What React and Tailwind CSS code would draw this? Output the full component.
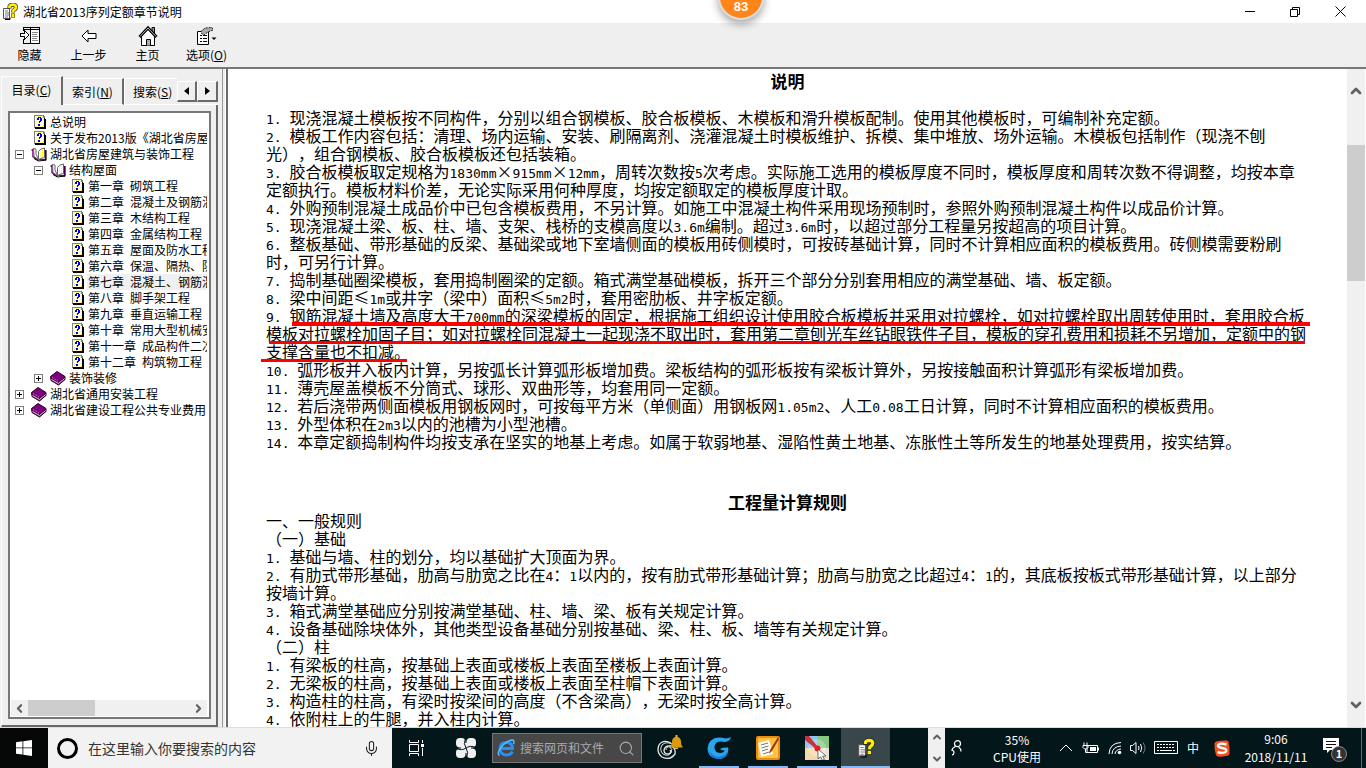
import { ChevronDown, ChevronLeft, ChevronRight, ChevronUp, Mic, Search } from 'lucide-react'

const TREE = [
  { level: 0, kind: 'page', label: '总说明' },
  { level: 0, kind: 'page', label: '关于发布2013版《湖北省房屋建筑与装饰工程》' },
  { level: 0, kind: 'open', label: '湖北省房屋建筑与装饰工程' },
  { level: 1, kind: 'open', label: '结构屋面' },
  { level: 2, kind: 'page', label: '第一章 砌筑工程' },
  { level: 2, kind: 'page', label: '第二章 混凝土及钢筋混凝土' },
  { level: 2, kind: 'page', label: '第三章 木结构工程' },
  { level: 2, kind: 'page', label: '第四章 金属结构工程' },
  { level: 2, kind: 'page', label: '第五章 屋面及防水工程' },
  { level: 2, kind: 'page', label: '第六章 保温、隔热、防腐' },
  { level: 2, kind: 'page', label: '第七章 混凝土、钢筋混凝土', selected: true },
  { level: 2, kind: 'page', label: '第八章 脚手架工程' },
  { level: 2, kind: 'page', label: '第九章 垂直运输工程' },
  { level: 2, kind: 'page', label: '第十章 常用大型机械安拆' },
  { level: 2, kind: 'page', label: '第十一章 成品构件二次运输' },
  { level: 2, kind: 'page', label: '第十二章 构筑物工程' },
  { level: 1, kind: 'closed', label: '装饰装修' },
  { level: 0, kind: 'closed', label: '湖北省通用安装工程' },
  { level: 0, kind: 'closed', label: '湖北省建设工程公共专业费用' },
]

const NOTES = [
  '1. 现浇混凝土模板按不同构件，分别以组合钢模板、胶合板模板、木模板和滑升模板配制。使用其他模板时，可编制补充定额。',
  '2. 模板工作内容包括：清理、场内运输、安装、刷隔离剂、浇灌混凝土时模板维护、拆模、集中堆放、场外运输。木模板包括制作（现浇不刨',
  '光），组合钢模板、胶合板模板还包括装箱。',
  '3. 胶合板模板取定规格为1830mm×915mm×12mm，周转次数按5次考虑。实际施工选用的模板厚度不同时，模板厚度和周转次数不得调整，均按本章',
  '定额执行。模板材料价差，无论实际采用何种厚度，均按定额取定的模板厚度计取。',
  '4. 外购预制混凝土成品价中已包含模板费用，不另计算。如施工中混凝土构件采用现场预制时，参照外购预制混凝土构件以成品价计算。',
  '5. 现浇混凝土梁、板、柱、墙、支架、栈桥的支模高度以3.6m编制。超过3.6m时，以超过部分工程量另按超高的项目计算。',
  '6. 整板基础、带形基础的反梁、基础梁或地下室墙侧面的模板用砖侧模时，可按砖基础计算，同时不计算相应面积的模板费用。砖侧模需要粉刷',
  '时，可另行计算。',
  '7. 捣制基础圈梁模板，套用捣制圈梁的定额。箱式满堂基础模板，拆开三个部分分别套用相应的满堂基础、墙、板定额。',
  '8. 梁中间距≤1m或井字（梁中）面积≤5m2时，套用密肋板、井字板定额。',
  {
    text: '9. 钢筋混凝土墙及高度大于700mm的深梁模板的固定，根据施工组织设计使用胶合板模板并采用对拉螺栓，如对拉螺栓取出周转使用时，套用胶合板',
    mark: 'left-[26px] top-4 h-1 w-[1018px]',
  },
  {
    text: '模板对拉螺栓加固子目；如对拉螺栓同混凝土一起现浇不取出时，套用第二章刨光车丝钻眼铁件子目，模板的穿孔费用和损耗不另增加，定额中的钢',
    mark: 'left-[3px] top-[17px] h-[3px] w-[1036px]',
  },
  { text: '支撑含量也不扣减。', mark: '-left-[5px] top-[17px] h-[3px] w-[146px]' },
  '10. 弧形板并入板内计算，另按弧长计算弧形板增加费。梁板结构的弧形板按有梁板计算外，另按接触面积计算弧形有梁板增加费。',
  '11. 薄壳屋盖模板不分筒式、球形、双曲形等，均套用同一定额。',
  '12. 若后浇带两侧面模板用钢板网时，可按每平方米（单侧面）用钢板网1.05m2、人工0.08工日计算，同时不计算相应面积的模板费用。',
  '13. 外型体积在2m3以内的池槽为小型池槽。',
  '14. 本章定额捣制构件均按支承在坚实的地基上考虑。如属于软弱地基、湿陷性黄土地基、冻胀性土等所发生的地基处理费用，按实结算。',
]

const RULES = [
  '一、一般规则',
  '（一）基础',
  '1. 基础与墙、柱的划分，均以基础扩大顶面为界。',
  '2. 有肋式带形基础，肋高与肋宽之比在4：1以内的，按有肋式带形基础计算；肋高与肋宽之比超过4：1的，其底板按板式带形基础计算，以上部分',
  '按墙计算。',
  '3. 箱式满堂基础应分别按满堂基础、柱、墙、梁、板有关规定计算。',
  '4. 设备基础除块体外，其他类型设备基础分别按基础、梁、柱、板、墙等有关规定计算。',
  '（二）柱',
  '1. 有梁板的柱高，按基础上表面或楼板上表面至楼板上表面计算。',
  '2. 无梁板的柱高，按基础上表面或楼板上表面至柱帽下表面计算。',
  '3. 构造柱的柱高，有梁时按梁间的高度（不含梁高），无梁时按全高计算。',
  '4. 依附柱上的牛腿，并入柱内计算。',
]

// Latin runs are set half as wide as the Chinese characters around them
function Line({ text, mark }) {
  const parts = text.split(/([\x20-\x7e]+)/)
  return (
    <p className="relative h-[18px] whitespace-pre">
      {parts.map((part, i) =>
        i % 2 ? (
          <span key={i} className="font-['DejaVu_Sans_Mono',monospace] text-[13px]">
            {part}
          </span>
        ) : (
          part
        ),
      )}
      {mark ? <span className={`absolute bg-[#fe0000] ${mark}`} /> : null}
    </p>
  )
}

function HelpIcon({ className }) {
  return (
    <svg viewBox="0 0 16 17" className={className}>
      <path d="M1.500 5.500h6v10h-6z" fill="#fff" stroke="#555" />
      <path d="M3 8h3M3 10h4M3 12h4M3 14h3" stroke="#777" />
      <path d="M8 14.500v2H3" stroke="#000" fill="none" />
      <path
        d="M7.500 5.500V4q0-2 3-2.300 3.500 0 3.500 2.500 0 1.500-1.700 2.600-1.300.8-1.300 2.700"
        fill="none"
        stroke="#222"
        strokeWidth="4"
      />
      <path d="M9 10.500h4v4H9z" fill="#222" />
      <path
        d="M7.500 5V4q0-2 3-2.300 3.500 0 3.500 2.500 0 1.500-1.700 2.600-1.300.8-1.300 2.700"
        fill="none"
        stroke="#ffee00"
        strokeWidth="2.800"
      />
      <path d="M9.500 11h3v3h-3z" fill="#ffee00" />
    </svg>
  )
}

function PageIcon() {
  return (
    <svg width="12" height="14" viewBox="0 0 12 14" shapeRendering="crispEdges">
      <path d="M0 0h9l2 2v11H0z" fill="#808080" />
      <path d="M1 1h8v2h1v9H1z" fill="#fffff0" />
      <path d="M2 2h1v1H2zM4 1h1v1H4zM6 1h1v1H6zM8 2h1v1H8zM2 4h1v1H2zM2 6h1v1H2zM2 8h1v1H2zM2 10h1v1H2zM4 11h1v1H4zM8 11h1v1H8zM9 4h1v1H9zM9 8h1v1H9zM9 10h1v1H9zM3 9h1v1H3zM4 7h1v1H4z" fill="#ffee33" />
      <path d="M10 3h1v10H1v-1h9zM11 4h1v10H1v-1h10z" fill="#000" />
      <path d="M4 2h3v1H4zM3 3h2v2H3zM6 3h2v3H6zM5 6h2v1H5zM5 7h1v1H5zM4 9h2v2H4z" fill="#0000f0" />
    </svg>
  )
}

function OpenBookIcon() {
  return (
    <svg width="16" height="15" viewBox="0 0 16 15">
      <path d="M.5 3.500 2 2.500v7l5 3.500 1-1 6.500 1V3" fill="#fff" stroke="#800080" strokeWidth="1.500" />
      <path d="M2.500 1.500 5 2v5l2.500 5.500L3 9.500z" fill="#fff" stroke="#666" />
      <path d="M7.500 12.500V4.500Q9 1.500 13.500 1v9.500q-3 .5-6 2z" fill="#fff" stroke="#666" />
      <path d="M9.500 4.500v5M11.500 3v7" stroke="#ffee33" strokeDasharray="1 1" />
      <path d="M3 11.500 7.500 14l7.500-1V3" fill="none" stroke="#000" />
    </svg>
  )
}

function ClosedBookIcon() {
  return (
    <svg width="16" height="15" viewBox="0 0 16 15">
      <path d="M.5 5.500 7 .5l8 5v3L8.500 14 1 9.500z" fill="#800080" stroke="#200020" />
      <path d="M1.500 8.500 8.500 12.500l6-5" fill="none" stroke="#ccc" />
      <path d="M1 6.500 8.500 11l6.500-5" fill="none" stroke="#400040" />
      <path d="M2 6.500l6.500 4" stroke="#d8a0d8" strokeDasharray="1 1" />
    </svg>
  )
}

function TreeRow({ item }) {
  const indent = ['pl-1', 'pl-[23px]', 'pl-[42px]'][item.level]
  return (
    <li className={`flex h-4 items-center whitespace-nowrap ${indent}`}>
      {item.kind === 'page' ? (
        <span className="w-4 shrink-0" />
      ) : (
        <button type="button" aria-label={item.label} className="mr-[7px] h-[9px] w-[9px] shrink-0">
          <svg viewBox="0 0 9 9" shapeRendering="crispEdges" className="block">
            <path d="M.5.5h8v8h-8z" fill="#fff" stroke="#808080" />
            <path d={item.kind === 'open' ? 'M2 4.500h5' : 'M2 4.500h5M4.500 2v5'} stroke="#000" />
          </svg>
        </button>
      )}
      <span className={`flex w-[18px] shrink-0 ${item.kind === 'page' ? 'justify-center' : ''}`}>
        {item.kind === 'page' && <PageIcon />}
        {item.kind === 'open' && <OpenBookIcon />}
        {item.kind === 'closed' && <ClosedBookIcon />}
      </span>
      <a href="#" className={`flex h-4 grow items-center gap-1.5 pl-px ${item.selected ? 'bg-[#f0f0f0]' : ''}`}>
        {item.label.split(' ').map((word) => (
          <span key={word}>{word}</span>
        ))}
      </a>
    </li>
  )
}

function ToolButton({ label, children }) {
  return (
    <button type="button" className="flex w-[59px] flex-col items-center gap-px pt-[3px]">
      <span className="flex h-5 items-center">{children}</span>
      <span className="whitespace-nowrap leading-4">{label}</span>
    </button>
  )
}

function Toolbar() {
  return (
    <div className="flex h-11 shrink-0 bg-[#efefef]">
      <ToolButton label="隐藏">
        <svg width="20" height="18" viewBox="0 0 20 18" shapeRendering="crispEdges">
          <path d="M3.500 4V.5h16v16h-16V12M10.500 0v17M3.500 2.500h16" fill="none" stroke="#000" />
          <path d="M11 3h8v13h-8z" fill="#fff" />
          <path d="M12 5.500h6M12 7.500h5M12 9.500h6M12 11.500h5M12 13.500h6" stroke="#888" />
          <path d="M.5 6.500h4v-3l4.500 4.500-4.500 4.500v-3h-4z" fill="#fff" stroke="#000" />
        </svg>
      </ToolButton>
      <ToolButton label="上一步">
        <svg width="16" height="14" viewBox="0 0 16 14">
          <path d="M1 7 7 1v3.500h8v5H7V13z" fill="#fff" stroke="#000" />
        </svg>
      </ToolButton>
      <ToolButton label="主页">
        <svg width="20" height="20" viewBox="0 0 20 20">
          <path d="M14 7V1.500h2.500V9" fill="#999" stroke="#000" />
          <path d="M3.500 10v9.500h13V10L10 3z" fill="#fff" stroke="#000" />
          <path d="M1.500 11 10 2l8.500 9" fill="none" stroke="#000" strokeWidth="3" />
          <path d="M2 10.500 10 2l8 8.500" fill="none" stroke="#bbb" />
          <path d="M8.500 19.500v-6h4v6" fill="#aaa" stroke="#000" />
        </svg>
      </ToolButton>
      <ToolButton
        label={
          <>
            选项(<u>O</u>)
          </>
        }
      >
        <svg width="21" height="18" viewBox="0 0 21 18">
          <path d="M1.500 4.500h11v13h-11z" fill="#fff" stroke="#000" />
          <path d="M4 8.500h2M7 8.500h4M4 11.500h2M7 11.500h4M4 14.500h2M7 14.500h4" stroke="#000" />
          <path d="M5 4.500 9 1l7-.5 1 2.500-5 2-4 3-2-1z" fill="#aaa" stroke="#222" strokeDasharray="2 1" />
          <path d="M15.500 10.500h5L18 13z" fill="#000" />
        </svg>
      </ToolButton>
    </div>
  )
}

function Sidebar() {
  return (
    <aside className="flex w-[222px] shrink-0 flex-col bg-[#efefef] pl-px pt-[7px]">
      <div className="flex h-[29px] shrink-0 items-end">
        <button type="button" className="h-[29px] w-[62px] border-l border-r-2 border-t border-l-white border-r-[#696969] border-t-white pb-0.5">
          目录(<u>C</u>)
        </button>
        <button type="button" className="h-[27px] w-[61px] border-b border-r-2 border-t border-b-white border-r-[#696969] border-t-white">
          索引(<u>N</u>)
        </button>
        <button type="button" className="h-[27px] w-[53px] overflow-hidden whitespace-nowrap border-b border-l border-t border-white pl-2 text-left">
          搜索(<u>S</u>)
        </button>
        <span className="flex h-[27px] border-b border-white pt-[3px]">
          <button type="button" aria-label="向左" className="flex h-[21px] w-5 items-center justify-center border-b-2 border-l border-r-2 border-t border-b-[#696969] border-l-white border-r-[#696969] border-t-white">
            <svg width="5" height="8" viewBox="0 0 5 8"><path d="M5 0v8L0 4z" /></svg>
          </button>
          <button type="button" aria-label="向右" className="flex h-[21px] w-[21px] items-center justify-center border-b-2 border-l border-r-2 border-t border-b-[#696969] border-l-white border-r-[#696969] border-t-white">
            <svg width="5" height="8" viewBox="0 0 5 8"><path d="M0 0v8l5-4z" /></svg>
          </button>
        </span>
      </div>
      <div className="mr-1 flex min-h-0 flex-1 flex-col border-b-2 border-l border-r-2 border-b-[#696969] border-l-white border-r-[#696969] pb-1.5 pl-1.5 pr-[5px] pt-1.5">
        <div className="flex min-h-0 flex-1 flex-col border-2 border-[#777] bg-white p-px pr-0.5">
          <ul className="min-h-0 flex-1 overflow-hidden leading-4">
            {TREE.map((item) => (
              <TreeRow key={item.label} item={item} />
            ))}
          </ul>
          <div className="flex h-4 shrink-0 items-center bg-[#f0f0f0] text-[#606060]">
            <button type="button" aria-label="向左滚动" className="flex w-[17px] justify-center">
              <ChevronLeft size={13} strokeWidth={4} />
            </button>
            <span className="h-full w-[67px] bg-[#cdcdcd]" />
            <button type="button" aria-label="向右滚动" className="ml-auto flex w-[17px] justify-center">
              <ChevronRight size={13} strokeWidth={4} />
            </button>
          </div>
        </div>
      </div>
    </aside>
  )
}

function Article() {
  return (
    <main className="flex min-w-0 flex-1 border-l-2 border-[#696969] bg-white">
      <article className="min-w-0 flex-1 overflow-hidden pl-[38px] pt-[3px] font-['Noto_Sans_CJK_SC',sans-serif] text-base leading-[18px] [text-spacing-trim:space-all]">
        <h1 className="mb-[18px] -ml-[38px] text-center text-[17px] font-bold">说明</h1>
        {NOTES.map((note) =>
          typeof note === 'string' ? <Line key={note} text={note} /> : <Line key={note.text} {...note} />,
        )}
        <h2 className="-ml-[38px] mt-[43px] text-center text-[17px] font-bold">工程量计算规则</h2>
        {RULES.map((rule) => (
          <Line key={rule} text={rule} />
        ))}
      </article>
      <div className="mr-px flex w-[18px] shrink-0 flex-col items-center bg-[#f0f0f0] py-3.5 text-[#606060]">
        <button type="button" aria-label="向上滚动">
          <ChevronUp size={16} strokeWidth={4} className="block" />
        </button>
        <span className="mt-[46px] h-[136px] w-full bg-[#cdcdcd]" />
        <button type="button" aria-label="向下滚动" className="mt-auto">
          <ChevronDown size={16} strokeWidth={4} className="block" />
        </button>
      </div>
    </main>
  )
}

function TaskButton({ label, active, running, children }) {
  return (
    <button
      type="button"
      aria-label={label}
      className={`relative flex w-[49px] shrink-0 items-center justify-center ${active ? 'bg-[#3a474a]' : ''}`}
    >
      {children}
      {running ? <span className="absolute bottom-0 left-[5px] h-0.5 w-10 bg-[#84b9f5]" /> : null}
      {active ? <span className="absolute inset-x-0 bottom-0 h-0.5 bg-[#84b9f5]" /> : null}
    </button>
  )
}

function Taskbar() {
  return (
    <footer className="flex h-10 shrink-0 bg-[#03161a] text-white">
      <button type="button" aria-label="开始" className="flex w-12 shrink-0 items-center justify-center bg-[#060808]">
        <svg width="16" height="16" viewBox="0 0 16 16" fill="#fff">
          <path d="M0 2.200 6.500 1.300v6.200H0zM7.300 1.200 16 0v7.500H7.300zM0 8.300h6.500v6.300L0 13.700zM7.300 8.300H16V16l-8.700-1.200z" />
        </svg>
      </button>
      <div className="flex w-[344px] shrink-0 items-center bg-[#f2f2f2] pl-[9px] pr-3 text-[#222]">
        <span className="h-[21px] w-[21px] rounded-full border-[3px] border-black" />
        <input
          aria-label="在这里输入你要搜索的内容"
          placeholder="在这里输入你要搜索的内容"
          className="ml-2.5 min-w-0 flex-1 bg-transparent text-sm outline-none placeholder:text-[#333]"
        />
        <Mic size={17} strokeWidth={1.500} />
      </div>
      <TaskButton label="任务视图">
        <svg width="17" height="16" viewBox="0 0 17 16" fill="none" stroke="#fff">
          <path d="M1.500 0v2.500h9V0M1.500 16v-2.500h9V16M1.500 4.500h9v7h-9zM14.500 0v3M14.500 8v8" />
          <path d="M13 4h3v3h-3z" fill="#fff" stroke="none" />
        </svg>
      </TaskButton>
      <TaskButton label="浏览器">
        <svg width="22" height="22" viewBox="0 0 22 22">
          <g fill="#f0f0f0">
            <rect x="1" y="1" width="9.500" height="9.500" rx="4" />
            <rect x="11.500" y="1" width="9.500" height="9.500" rx="4" />
            <rect x="1" y="11.500" width="9.500" height="9.500" rx="4" />
            <rect x="11.500" y="11.500" width="9.500" height="9.500" rx="4" />
            <circle cx="11" cy="11" r="5" />
          </g>
          <path d="M11 11Q8 7 10.500 1M11 11q4-3 10.500-.5M11 11q3 4 .5 10M11 11q-4 3-10.500.5" fill="none" stroke="#03161a" />
        </svg>
      </TaskButton>
      <label className="my-[5px] ml-0.5 flex w-[150px] shrink-0 items-center border border-[#777] bg-[#474747] pl-1 pr-1.5">
        <svg width="18" height="18" viewBox="0 0 18 18" fill="none">
          <path d="M15.500 12.500Q13.500 16 9.500 16 3.500 16 3 9.500 3.500 3.500 9.500 3.500q6 0 6 6H4" stroke="#2590f5" strokeWidth="3" />
          <path d="M2.500 16.500Q-.5 15 4 8.500 9 2 15 1q3 0 1.500 4" stroke="#58bfff" strokeWidth="1.400" />
        </svg>
        <input aria-label="搜索网页和文件" placeholder="搜索网页和文件" className="ml-[5px] w-[94px] min-w-0 bg-transparent text-xs outline-none placeholder:text-[#aaa]" />
        <Search size={17} strokeWidth={1.500} className="ml-auto text-[#aaa]" />
      </label>
      <span className="w-[3px] shrink-0" />
      <TaskButton label="提醒">
        <svg width="26" height="26" viewBox="0 0 26 26" fill="none">
          <path d="M14 8Q6 4 2 10q-3 7 3 12 8 4 13-3 1-6-4-8-6-1-7 4 0 4 4 4 4-1 2-4" stroke="#e8e8e8" strokeWidth="1.300" />
          <path d="M15 9Q9 6 5 10q-3 5 1 9 5 3 8-1 2-4-1-6-4-1-4 3" stroke="#e8e8e8" />
          <path d="M13 12.500q2-2 2-5.500 0-5 4.500-5T24 7q0 3.500 2 5.500z" fill="#d99a10" />
          <path d="M18 12.500h3V14h-3zM18.500 0h2v3h-2z" fill="#f1b522" />
        </svg>
      </TaskButton>
      <TaskButton label="极速浏览器" running>
        <svg width="24" height="24" viewBox="0 0 26 26">
          <path d="M26 1q-1 5-7 5.500Q9 4.500 8 12q0 6 6 6.500 4.500 0 5-3-3 .5-5-1.500 4-2 9-1.500Q24 24 12.500 25 1 24 .5 13.500 2 2 13 1.500q4 0 6 1 4 .5 7-1.500z" fill="#29a5ef" />
          <path d="M2 16q5 7 12 6.500 6-1 8-6Q22 24 13 25 4 24 2 16z" fill="#1678de" />
        </svg>
      </TaskButton>
      <TaskButton label="记事" running>
        <svg width="24" height="24" viewBox="0 0 24 24">
          <rect width="24" height="24" rx="2" fill="#f08c0a" />
          <rect x="2" y="2" width="20" height="20" rx="1" fill="#ffc247" />
          <path d="m2 7 11-3 4 14-12 3z" fill="#fffdf4" />
          <path d="m5 9 7-2M5.500 12l7-2M6 15l6-2M7 18l6-2" stroke="#777" />
          <path d="M22 1 14 14l-1 4 3-3 7-12z" fill="#9c3b13" />
        </svg>
      </TaskButton>
      <TaskButton label="照片" running>
        <svg width="24" height="24" viewBox="0 0 24 24">
          <path d="M0 0h12v12H0z" fill="#8cc7ee" />
          <path d="M12 0h12v12H12z" fill="#83c983" />
          <path d="M0 12h12v12H0z" fill="#f6d7ac" />
          <path d="M12 12h12v12H12z" fill="#e9e2d5" />
          <circle cx="12" cy="12" r="9" fill="#fff" opacity=".25" />
          <path d="m0 0 4 0 9 11-2 2L0 4z" fill="#c9323d" />
          <circle cx="12.500" cy="12.500" r="3" fill="#ee1c24" />
          <path d="m13 13 8 7-3.500.3 2 3-2 1-2-3.500L13 23z" fill="#fff" stroke="#333" strokeWidth=".7" />
        </svg>
      </TaskButton>
      <TaskButton label="帮助" active>
        <HelpIcon className="h-5 w-[18px]" />
      </TaskButton>
      <span className="flex-1" />
      <span className="flex w-[17px] shrink-0 flex-col items-center justify-between bg-[#f0f0f0] py-[3px] text-[#606060]">
        <ChevronUp size={12} strokeWidth={4} />
        <ChevronDown size={12} strokeWidth={4} />
      </span>
      <span className="flex w-[22px] shrink-0 items-center justify-center">
        <svg width="11" height="16" viewBox="0 0 11 16" fill="none" stroke="#fff" strokeWidth="1.200">
          <circle cx="6.500" cy="3.700" r="3" />
          <path d="M4.500 6.500Q1 8 1 10.500q2 0 2 2T1 15M7.500 7q2.500 1.500 2.500 4.500" />
        </svg>
      </span>
      <span className="ml-2 w-[84px] shrink-0 pt-[3px] text-center leading-[17px]">
        35%
        <br />
        CPU使用
      </span>
      <button type="button" aria-label="显示隐藏的图标" className="flex w-3.5 shrink-0 items-center justify-center">
        <svg width="14" height="8" viewBox="0 0 14 8" fill="none" stroke="#fff"><path d="m1 7 6-6 6 6" /></svg>
      </button>
      <span className="flex w-[34px] shrink-0 items-center justify-center">
        <svg width="17" height="12" viewBox="0 0 17 12" fill="none" stroke="#fff">
          <path d="M5 3.500h10.500v7H5zM16.500 5.500v3M2 .5v3M5 .5v3M1 3.500h5v2L4.500 7h-2L1 5.500zM3.500 7v3.500H6" />
          <path d="M8 5h6v4H8z" fill="#fff" stroke="none" />
        </svg>
      </span>
      <span className="flex w-4 shrink-0 items-center justify-center">
        <svg width="14" height="14" viewBox="0 0 14 14" fill="none" stroke="#fff">
          <path d="M1 13Q1.500 2 13 1.500M4 13q.5-7.500 9-8M7 13q.5-4.500 6-5" />
          <circle cx="11.500" cy="11.500" r="1.800" fill="#fff" stroke="none" />
        </svg>
      </span>
      <span className="flex w-[30px] shrink-0 items-center justify-center">
        <svg width="17" height="14" viewBox="0 0 17 14" fill="none" stroke="#fff">
          <path d="M.5 4.500h2L6 1.500v11L2.500 9.500h-2zM8.500 5q1 2 0 4M10.500 3q2.500 4 0 8" />
          <path d="M13 1.500q4 5.500 0 11" stroke="#777" />
        </svg>
      </span>
      <span className="flex w-[26px] shrink-0 items-center justify-center">
        <svg width="24" height="14" viewBox="0 0 24 14" fill="none" stroke="#fff">
          <path d="M.5.5h23v12H.5z" />
          <path d="M3 3.500h18M3 6.500h18" strokeDasharray="2 1" />
          <path d="M3 9.500h2M6 9.500h12M19 9.500h2" />
        </svg>
      </span>
      <button type="button" className="w-7 shrink-0 text-xs">中</button>
      <span className="flex w-[30px] shrink-0 items-center justify-center">
        <svg width="16" height="17" viewBox="0 0 16 17">
          <path d="M2 1.500Q8 0 13 .5l1.500 1Q16 8 15.500 14l-1 1.500Q9 17 3.500 16.500L2 15Q0 9 .5 3z" fill="#f4501e" />
          <path d="M12.500 4.500Q5 2.500 4 5.500 4 7.500 8.500 8q5 1 3.500 3.500-2 2.500-8.500.5" fill="none" stroke="#fff" strokeWidth="2.400" />
        </svg>
      </span>
      <time className="w-[78px] shrink-0 pt-0.5 text-center leading-[18px]">
        9:06
        <br />
        2018/11/11
      </time>
      <button type="button" aria-label="通知" className="flex w-9 shrink-0 items-center justify-center pl-1 pt-1">
        <svg width="26" height="26" viewBox="0 0 26 26">
          <path d="M1 1h16v12H8l-3 3v-3H1z" fill="#fff" />
          <path d="M4 4.500h10M4 7.500h10M4 10.500h6" stroke="#111" />
          <circle cx="17" cy="17" r="7.500" fill="#333" stroke="#888" />
          <text x="17" y="21" textAnchor="middle" fontSize="11" fontWeight="700" fill="#fff">1</text>
        </svg>
      </button>
      <span className="ml-2.5 w-[5px] shrink-0 border-l border-[#666]" />
    </footer>
  )
}

export default function App() {
  return (
    <div className="flex h-screen flex-col overflow-hidden bg-[#efefef] font-['Noto_Sans_CJK_SC',sans-serif] text-xs text-black">
      <header className="relative flex h-[23px] shrink-0 items-center bg-white pl-0.5">
        <HelpIcon className="h-[17px] w-4" />
        <span className="ml-[5px]">湖北省2013序列定额章节说明</span>
        <div className="absolute -top-[26px] left-[718px] z-10 flex h-[46px] w-[46px] items-end justify-center rounded-full border-2 border-[#ddd] bg-[#ff8519] pb-[3px] font-['Liberation_Sans',sans-serif] text-[13px] font-bold text-white shadow-[0_4px_8px_rgba(0,0,0,0.35)]">
          83
        </div>
        <div className="ml-auto flex h-full">
          <button type="button" aria-label="最小化" className="flex w-[45px] items-center justify-center">
            <svg width="10" height="10" viewBox="0 0 10 10"><path d="M0 4.500h10" stroke="#000" /></svg>
          </button>
          <button type="button" aria-label="还原" className="flex w-[45px] items-center justify-center">
            <svg width="10" height="10" viewBox="0 0 10 10" fill="none" stroke="#000"><path d="M.5 2.500h7v7h-7zM2.500 2.500v-2h7v7h-2" /></svg>
          </button>
          <button type="button" aria-label="关闭" className="mr-[3px] flex w-[46px] items-center justify-center">
            <svg width="11" height="11" viewBox="0 0 11 11" stroke="#000"><path d="m.5.5 10 10M10.500.5l-10 10" /></svg>
          </button>
        </div>
      </header>
      <Toolbar />
      <div className="flex min-h-0 flex-1 border-b border-t-2 border-b-[#ddd] border-t-[#777]">
        <Sidebar />
        <span className="w-1 shrink-0 border-l border-r border-l-[#999] border-r-white bg-[#efefef]" />
        <Article />
      </div>
      <Taskbar />
    </div>
  )
}
